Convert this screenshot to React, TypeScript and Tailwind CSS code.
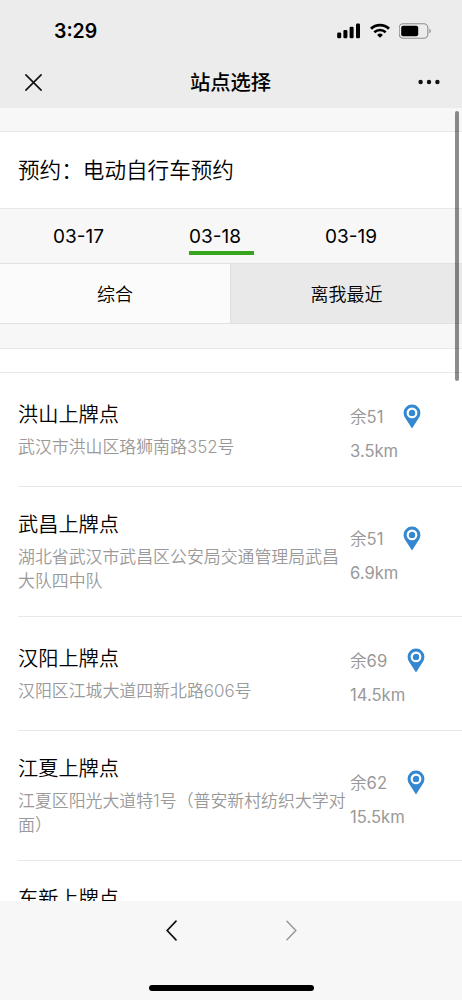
import { useState } from "react";

interface Station {
  name: string;
  address: string;
  remaining: number;
  distance: string;
  rowClass: string;
}

const stations: Station[] = [
  { name: "洪山上牌点", address: "武汉市洪山区珞狮南路352号", remaining: 51, distance: "3.5km", rowClass: "h-[114px]" },
  { name: "武昌上牌点", address: "湖北省武汉市武昌区公安局交通管理局武昌大队四中队", remaining: 51, distance: "6.9km", rowClass: "h-[130px]" },
  { name: "汉阳上牌点", address: "汉阳区江城大道四新北路606号", remaining: 69, distance: "14.5km", rowClass: "h-[114px]" },
  { name: "江夏上牌点", address: "江夏区阳光大道特1号（普安新村纺织大学对面）", remaining: 62, distance: "15.5km", rowClass: "h-[130px]" },
];

const dates = ["03-17", "03-18", "03-19"];

function StatusBar() {
  return (
    <div className="flex h-[56px] items-center justify-between pt-[5px] pr-[30px] pl-[54px]">
      <span className="text-[19.5px] leading-6 font-semibold">3:29</span>
      <div className="flex items-center gap-[9px]">
        <svg width="24" height="16" viewBox="0 0 24 16" fill="#000">
          <rect x="0.2" y="9.6" width="4" height="5.6" rx="1.2" />
          <rect x="6.4" y="6.9" width="4" height="8.3" rx="1.2" />
          <rect x="12.6" y="3.8" width="4" height="11.4" rx="1.2" />
          <rect x="19" y="0.6" width="4" height="14.6" rx="1.2" />
        </svg>
        <svg width="20" height="16" viewBox="0 0 20 16" fill="none" stroke="#000">
          <path d="M1 5.7a13 13 0 0 1 18 0" strokeWidth="2.9" />
          <path d="M4.3 9.3a8.4 8.4 0 0 1 11.4 0" strokeWidth="2.6" />
          <path d="M10 14.8l-2.9-2.9a4.3 4.3 0 0 1 5.8 0z" fill="#000" stroke="none" />
        </svg>
        <svg width="33" height="16" viewBox="0 0 33 16">
          <rect x="0.2" y="0.8" width="28.6" height="14.4" rx="4" fill="none" stroke="#8e8e8e" strokeWidth="1.1" />
          <rect x="2.2" y="2.8" width="17" height="10.4" rx="2" />
          <path d="M30.4 5.7c1.8.6 1.8 4 0 4.6z" fill="#8e8e8e" />
        </svg>
      </div>
    </div>
  );
}

function NavBar() {
  return (
    <div className="flex h-[52px] items-center justify-between pr-[22px] pl-[25px]">
      <button type="button" aria-label="关闭" className="w-[18px]">
        <svg width="17" height="17" viewBox="0 0 17 17" stroke="#111" strokeWidth="1.6" strokeLinecap="round">
          <path d="M0.9 0.9l15.2 15.2M16.1 0.9L0.9 16.1" />
        </svg>
      </button>
      <h1 className="pt-0.5 text-[20.3px] leading-7 font-medium">站点选择</h1>
      <button type="button" aria-label="更多">
        <svg width="22" height="6" viewBox="0 0 22 6" fill="#111">
          <circle cx="2.6" cy="3" r="2.2" />
          <circle cx="11" cy="3" r="2.2" />
          <circle cx="19.4" cy="3" r="2.2" />
        </svg>
      </button>
    </div>
  );
}

function PinIcon() {
  return (
    <svg width="18" height="25" viewBox="0 0 18 25">
      <path
        d="M9 .5A8.4 8.4 0 0 0 .6 8.9c0 2.2 1.1 4.2 2.3 6.1L9 24.5 15.1 15c1.2-1.9 2.3-3.9 2.3-6.1A8.4 8.4 0 0 0 9 .5z"
        fill="#3488d1"
      />
      <circle cx="9" cy="8.9" r="4.3" fill="#3488d1" stroke="#fff" strokeWidth="2.2" />
    </svg>
  );
}

function StationRow({ station }: { station: Station }) {
  return (
    <li className={`flex shrink-0 items-center border-b border-[#e8e8e8] ${station.rowClass}`}>
      <div className="w-[332px] shrink-0 pt-px">
        <h3 className="text-[20.2px] leading-7">{station.name}</h3>
        <p className="mt-1.5 text-[16.9px] leading-6 text-[#999]">{station.address}</p>
      </div>
      <div className="pt-[8px] text-[16.6px] leading-[34px] font-normal whitespace-nowrap text-[#999]">
        <div className="flex h-[34px] items-center gap-5">
          <span>
            <span className="font-[350]">余</span>
            {station.remaining}
          </span>
          <PinIcon />
        </div>
        <div>{station.distance}</div>
      </div>
    </li>
  );
}

export default function App() {
  const [activeDate, setActiveDate] = useState("03-18");

  return (
    <div className="relative flex h-[1000px] w-[462px] flex-col overflow-hidden bg-[#f7f7f7] font-['Inter','Noto_Sans_CJK_SC',sans-serif] font-[350] text-black">
      <header className="h-[108px] shrink-0 bg-[#ececec]">
        <StatusBar />
        <NavBar />
      </header>

      <main className="flex min-h-0 flex-1 flex-col overflow-hidden">
        <h2 className="mt-[23px] flex h-[78px] shrink-0 items-center border-y border-[#e8e8e8] bg-white pt-px pl-[18px] text-[21.6px] font-[350]">
          预约：电动自行车预约
        </h2>

        <div className="flex h-[54px] shrink-0 gap-[71px] pl-[53px]">
          {dates.map((date) => (
            <button
              key={date}
              type="button"
              onClick={() => setActiveDate(date)}
              className="flex w-[65px] flex-col pt-[16px] text-left text-[19px] leading-6 font-normal"
            >
              {date}
              {date === activeDate && <span className="mt-[2px] h-[4px] w-full bg-[#37a41e]" />}
            </button>
          ))}
        </div>

        <div className="grid h-[61px] shrink-0 grid-cols-2 border-y border-[#e1e1e1] text-[18px]">
          <button type="button" className="border-r border-[#dedede] bg-[#fbfbfb] pt-px">
            综合
          </button>
          <button type="button" className="bg-[#e9e9e9] pt-px">
            离我最近
          </button>
        </div>

        <div className="mt-6 h-[25px] shrink-0 border-y border-[#e8e8e8] bg-white" />

        <ul className="flex min-h-0 flex-1 flex-col overflow-hidden bg-white pl-[18px]">
          {stations.map((station) => (
            <StationRow key={station.name} station={station} />
          ))}
          <li className="shrink-0 pt-6 text-[20.2px] leading-7">东新上牌点</li>
        </ul>
      </main>

      <footer className="flex h-[99px] shrink-0 flex-col items-center justify-between pt-[19px] pb-[9px]">
        <div className="flex gap-[109px]">
          <svg width="11" height="21" viewBox="0 0 11 21" fill="none" stroke="#111" strokeWidth="1.7" strokeLinecap="round">
            <path d="M10 1.2L1.2 10.5 10 19.8" />
          </svg>
          <svg width="11" height="21" viewBox="0 0 11 21" fill="none" stroke="#999" strokeWidth="1.5" strokeLinecap="round">
            <path d="M1 1.2l8.8 9.3L1 19.8" />
          </svg>
        </div>
        <div className="h-[6px] w-[165px] rounded-full bg-black" />
      </footer>

      <div className="absolute top-[111px] right-[3px] h-[270px] w-[4px] rounded-full bg-black/45" />
    </div>
  );
}
